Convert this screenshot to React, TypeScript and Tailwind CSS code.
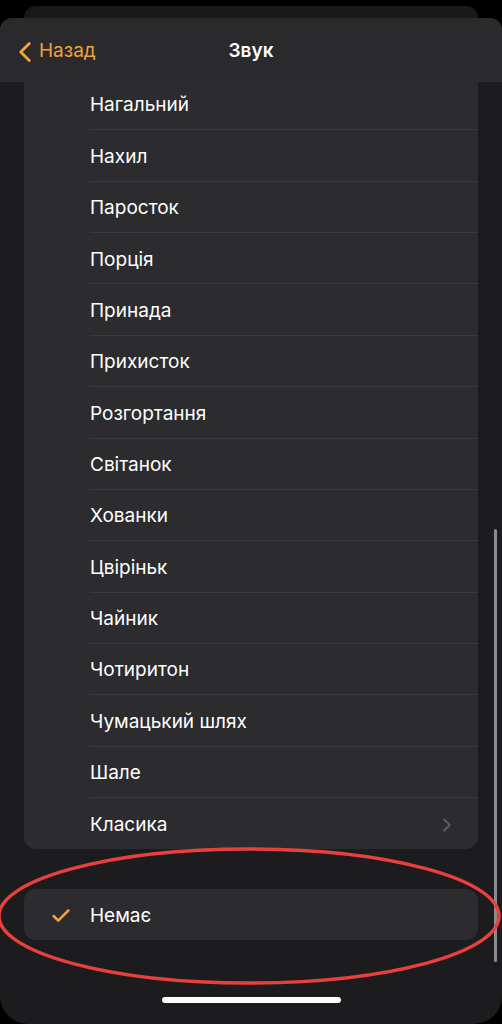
import { ChevronLeft, ChevronRight, Check } from 'lucide-react'

const sounds = [
  'Нагальний',
  'Нахил',
  'Паросток',
  'Порція',
  'Принада',
  'Прихисток',
  'Розгортання',
  'Світанок',
  'Хованки',
  'Цвіріньк',
  'Чайник',
  'Чотиритон',
  'Чумацький шлях',
  'Шале',
]

export default function App() {
  return (
    <div
      className="relative h-[1024px] w-[502px] overflow-hidden bg-black text-white"
      style={{ fontFamily: 'Inter, "Noto Sans", sans-serif' }}
    >
      {/* sheet behind */}
      <div className="mx-6 mt-[6px] h-[20px] rounded-t-[12px] bg-[#19191a]"></div>

      {/* main sheet */}
      <div className="absolute inset-x-0 top-[18px] bottom-0 flex flex-col overflow-hidden rounded-t-[12px] rounded-b-[28px] bg-[#1c1c1e]">
        {/* nav bar */}
        <div className="relative z-10 flex h-[64px] shrink-0 items-center bg-[#2a2a2c] border-b border-[#303032] pt-[4px]">
          <div className="flex items-center pl-[8px] text-[#f1a33b]">
            <ChevronLeft size={34} strokeWidth={2} />
            <span className="ml-[-3px] text-[19px]">Назад</span>
          </div>
          <div className="absolute left-1/2 top-[4px] bottom-0 flex -translate-x-1/2 items-center text-[19px] font-semibold">Звук</div>
        </div>

        {/* list */}
        <div className="flex-1 overflow-hidden">
          <div className="mx-6 -mt-[3px] overflow-hidden rounded-b-[12px] bg-[#2c2c2e]">
            {sounds.map((name) => (
              <div key={name} className="flex h-[51.36px] items-center pl-[66px]">
                <div className="flex h-full flex-1 items-center border-b border-[#3a3a3c] pt-[3px] text-[19px]">
                  {name}
                </div>
              </div>
            ))}
            <div className="flex h-[51.36px] items-center justify-between pl-[66px] pr-[20px] pt-[3px] text-[19px]">
              <span>Класика</span>
              <ChevronRight size={22} className="text-[#5e5e62]" strokeWidth={2.2} />
            </div>
          </div>

          <div className="mx-6 mt-[40px] flex h-[51px] items-center rounded-[12px] bg-[#2c2c2e] pt-[3px] text-[19px]">
            <div className="flex w-[66px] justify-center pl-[7px]">
              <Check size={22} className="text-[#f1a33b]" strokeWidth={2.8} />
            </div>
            <span>Немає</span>
          </div>
        </div>

        {/* home indicator */}
        <div className="flex h-[34px] shrink-0 items-start justify-center pt-[7px]">
          <div className="h-[6px] w-[179px] rounded-full bg-white"></div>
        </div>
      </div>

      {/* scroll indicator */}
      <div className="absolute left-[494px] top-[529px] h-[433px] w-[3px] rounded-full bg-[#8c8c8e]"></div>

      {/* red annotation ellipse */}
      <svg className="absolute left-0 top-0" width="502" height="1024">
        <ellipse cx="249" cy="916" rx="250" ry="67" fill="none" stroke="#e8403d" strokeWidth="3.5" />
      </svg>
    </div>
  )
}
